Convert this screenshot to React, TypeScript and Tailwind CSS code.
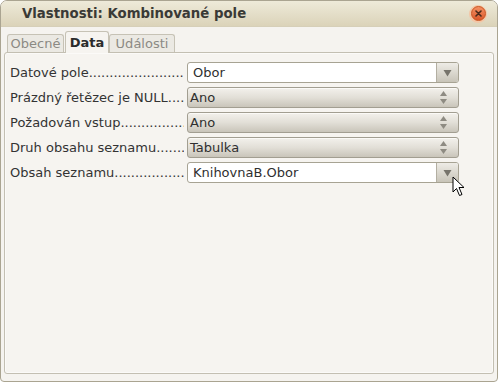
import React from "react";

const font = { fontFamily: '"DejaVu Sans", "Liberation Sans", sans-serif' };

function Dropdown({ value }: { value: string }) {
  return (
    <div className="relative w-[272px] h-[21px] bg-white border border-[#a7a393] rounded-[3px] flex items-center">
      <span className="pl-[5px] text-[13px] text-[#2f2f2f] leading-none">{value}</span>
      <div className="absolute right-0 top-0 bottom-0 w-[22px] border-l border-[#b3afa2] rounded-r-[2px] bg-gradient-to-b from-[#eeece6] to-[#c8c4b8] flex items-center justify-center">
        <svg width="9" height="8" viewBox="0 0 9 8">
          <path d="M0.5 1 L8.5 1 L4.5 7.5 Z" fill="#77746b" />
        </svg>
      </div>
    </div>
  );
}

function ListBox({ value }: { value: string }) {
  return (
    <div className="relative w-[272px] h-[21px] border border-[#a29e91] rounded-[3px] bg-gradient-to-b from-[#f3f1ec] via-[#e2dfd7] to-[#c9c5ba] flex items-center shadow-[inset_0_1px_0_#fbfaf7]">
      <span className="pl-[2px] text-[13px] text-[#2f2f2f] leading-none">{value}</span>
      <div className="absolute right-[11px] top-0 bottom-0 flex flex-col items-center justify-center gap-[3px]">
        <svg width="7" height="5" viewBox="0 0 7 5">
          <path d="M0 5 L7 5 L3.5 0 Z" fill="#8e8b82" />
        </svg>
        <svg width="7" height="5" viewBox="0 0 7 5">
          <path d="M0 0 L7 0 L3.5 5 Z" fill="#8e8b82" />
        </svg>
      </div>
    </div>
  );
}

function Row({ label, children }: { label: string; children: React.ReactNode }) {
  return (
    <div className="flex items-center h-[21px] mb-[4px]">
      <div className="w-[177px] pr-[3px]">
        <div className="whitespace-nowrap overflow-hidden text-[13px] text-[#333333] leading-[16px] w-[174px]">
          {label}
        </div>
      </div>
      {children}
    </div>
  );
}

export default function App() {
  return (
    <div style={font} className="w-[498px] h-[382px] relative overflow-hidden bg-white">
      <div className="w-[498px] h-[382px] border border-[#aaa491] rounded-t-[7px] rounded-b-[4px] bg-[#f5f3ef] flex flex-col overflow-hidden">
        <div className="h-[26px] shrink-0 bg-gradient-to-b from-[#eeead9] to-[#dbd3b9] flex items-center justify-between pl-[21px] pr-[10px] border-b border-[#d6cfb8]">
          <span className="text-[13.3px] font-bold text-[#3a3a36] leading-none pt-[1px]">
            Vlastnosti: Kombinované pole
          </span>
          <div className="w-[18px] h-[18px] rounded-full bg-[#f3c6a6] flex items-center justify-center">
            <div className="w-[15px] h-[15px] rounded-full bg-gradient-to-b from-[#f39062] to-[#d9582a] border border-[#c9531f] flex items-center justify-center">
              <svg width="7" height="7" viewBox="0 0 7 7">
                <path d="M1 1 L6 6 M6 1 L1 6" stroke="#4a2a1a" strokeWidth="1.6" strokeLinecap="round" />
              </svg>
            </div>
          </div>
        </div>
        <div className="flex-1 flex flex-col px-[3px] pb-[7px] pt-[3px]">
          <div className="flex items-end h-[22px] pl-[3px] relative z-10">
            <div className="h-[18px] w-[57px] border border-b-0 border-[#c6c2b5] rounded-t-[3px] bg-[#ebe9e3] flex items-center justify-center text-[13px] text-[#8b8a84] leading-none">
              Obecné
            </div>
            <div className="h-[22px] w-[44px] ml-[1px] border border-b-0 border-[#c6c2b5] rounded-t-[3px] bg-[#f6f4f0] flex items-center justify-center text-[13px] font-bold text-[#2b2b2b] leading-none -mb-[1px] pb-[1px]">
              Data
            </div>
            <div className="h-[18px] w-[66px] border border-b-0 border-[#c6c2b5] rounded-t-[3px] bg-[#ebe9e3] flex items-center justify-center text-[13px] text-[#8b8a84] leading-none">
              Události
            </div>
          </div>
          <div className="flex-1 border border-[#c3bfb2] rounded-[3px] bg-[#f6f4f0] pt-[9px] pl-[5px] shadow-[inset_0_0_0_1px_#fbfaf8]">
            <Row label="Datové pole........................................">
              <Dropdown value="Obor" />
            </Row>
            <Row label="Prázdný řetězec je NULL....................">
              <ListBox value="Ano" />
            </Row>
            <Row label="Požadován vstup..............................">
              <ListBox value="Ano" />
            </Row>
            <Row label="Druh obsahu seznamu.....................">
              <ListBox value="Tabulka" />
            </Row>
            <Row label="Obsah seznamu.................................">
              <Dropdown value="KnihovnaB.Obor" />
            </Row>
          </div>
        </div>
      </div>
      <svg className="absolute left-[452px] top-[176px]" width="14" height="21" viewBox="0 0 14 21">
        <path d="M1 1 L1 16 L4.5 12.5 L7.5 19.5 L10 18.5 L7 11.5 L12 11.5 Z" fill="#ffffff" stroke="#000000" strokeWidth="1" strokeLinejoin="round" />
      </svg>
    </div>
  );
}
